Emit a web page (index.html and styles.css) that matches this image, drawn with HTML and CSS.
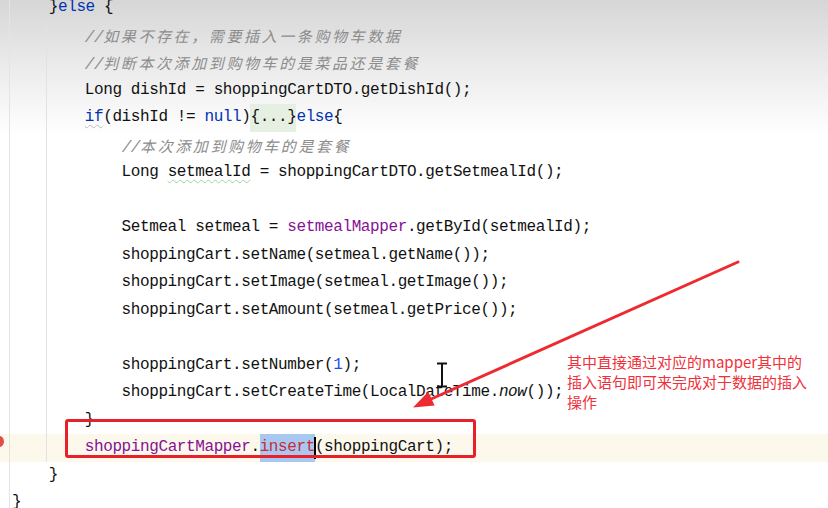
FILE: index.html
```html
<!DOCTYPE html>
<html lang="zh">
<head>
<meta charset="utf-8">
<title>ShoppingCart code</title>
<link rel="stylesheet" href="styles.css">
</head>
<body>
<div class="editor">
  <div class="code">
    <div class="ln">    }<span class="kw">else</span> {</div>
    <div class="block">
      <div class="ln">    <span class="cm">//<span class="cjk">如果不存在，需要插入一条购物车数据</span></span></div>
      <div class="ln">    <span class="cm">//<span class="cjk">判断本次添加到购物车的是菜品还是套餐</span></span></div>
      <div class="ln">    Long dishId = shoppingCartDTO.getDishId();</div>
      <div class="ln">    <span class="kw wave-gray">if</span>(dishId != <span class="kw">null</span>)<span class="fold">{...}</span><span class="kw">else</span>{</div>
      <div class="ln">        <span class="cm">//<span class="cjk">本次添加到购物车的是套餐</span></span></div>
      <div class="ln">        Long <span class="wave-green">setmealId</span> = shoppingCartDTO.getSetmealId();</div>
      <div class="ln"> </div>
      <div class="ln">        Setmeal setmeal = <span class="fld">setmealMapper</span>.getById(setmealId);</div>
      <div class="ln">        shoppingCart.setName(setmeal.getName());</div>
      <div class="ln">        shoppingCart.setImage(setmeal.getImage());</div>
      <div class="ln">        shoppingCart.setAmount(setmeal.getPrice());</div>
      <div class="ln"> </div>
      <div class="ln">        shoppingCart.setNumber(<span class="num">1</span>);</div>
      <div class="ln">        shoppingCart.setCreateTime(LocalDateTime.<span class="st">now</span>());</div>
      <div class="ln">    }</div>
      <div class="ln hl">    <span class="fld">shoppingCartMapper</span>.<span class="sel">insert</span>(shoppingCart);</div>
    </div>
    <div class="ln">    }</div>
    <div class="ln">}</div>
  </div>

  <div class="bp"></div>
  <div class="redbox"></div>
  <svg class="arrow" width="828" height="508" viewBox="0 0 828 508">
    <line x1="738" y1="262" x2="430" y2="399.5" stroke="#ec2a30" stroke-width="3" stroke-linecap="round"/>
    <polygon points="413,407.5 434.6,405.6 428.2,391.8" fill="#ec2a30"/>
  </svg>
  <svg class="ibeam" width="14" height="26" viewBox="0 0 14 26">
    <path d="M2 1.5 H12 M7 1.5 V24.5 M2 24.5 H12" stroke="#111" stroke-width="2" fill="none"/>
  </svg>
  <div class="note">其中直接通过对应的mapper其中的插入语句即可来完成对于数据的插入操作</div>
</div>
</body>
</html>
```

FILE: styles.css
```css
html, body {
  margin: 0;
  padding: 0;
  overflow: hidden;
}

body {
  width: 828px;
  height: 508px;
  background: linear-gradient(to bottom, #d6d6d6 0px, #e9e9e9 60px, #ffffff 135px, #ffffff 100%);
}

.editor {
  position: relative;
  display: flow-root;
  height: 508px;
  padding-left: 9px;
}

.code {
  margin-top: -6px;
  border-left: 1px solid #e4e4e4;
  padding-left: 2px;
  font-family: "Liberation Mono", "DejaVu Sans Mono", monospace;
  font-size: 16px;
  letter-spacing: -0.4px;
  color: #111;
}

.ln {
  height: 27.5px;
  line-height: 27.5px;
  white-space: pre;
}

.block {
  margin-left: 34px;
  border-left: 1px solid #e2e2e2;
  padding-left: 1px;
}

.kw { color: #0033b3; }
.fld { color: #871094; }
.num { color: #1750eb; }
.st { font-style: italic; }

.cm {
  color: #8c8c8c;
  font-style: italic;
}

.cjk {
  font-family: "Noto Sans CJK SC", sans-serif;
  font-size: 15px;
  letter-spacing: 2.6px;
  font-style: italic;
}

.wave-gray {
  text-decoration: underline wavy #bcbcbc;
  text-decoration-thickness: 1px;
  text-underline-offset: 3px;
}

.wave-green {
  text-decoration: underline wavy #9ed49e;
  text-decoration-thickness: 1px;
  text-underline-offset: 3px;
}

.fold {
  display: inline-block;
  background: #e6f0e2;
  height: 27.5px;
}

.hl {
  position: relative;
}

.hl::before {
  content: "";
  position: absolute;
  top: 0;
  bottom: 0;
  left: -80px;
  width: 900px;
  background: #fcf8ec;
  z-index: -1;
}

.sel {
  position: relative;
  display: inline-block;
  height: 27.5px;
  background: #a9c8f0;
  color: #cc2a3a;
}

.sel::after {
  content: "";
  position: absolute;
  right: -1px;
  top: 3px;
  height: 22px;
  width: 2px;
  background: #000;
}

.bp {
  position: absolute;
  left: -6px;
  top: 436px;
  width: 10px;
  height: 11px;
  border-radius: 50%;
  background: #e0504a;
}

.redbox {
  position: absolute;
  left: 65px;
  top: 419px;
  width: 411px;
  height: 39px;
  box-sizing: border-box;
  border: 3.5px solid #e8202a;
  border-radius: 3px;
}

.arrow {
  position: absolute;
  left: 0;
  top: 0;
  pointer-events: none;
}

.ibeam {
  position: absolute;
  left: 435px;
  top: 362px;
}

.note {
  position: absolute;
  left: 567px;
  top: 352px;
  width: 246px;
  font-family: "Noto Sans CJK SC", sans-serif;
  font-size: 15px;
  line-height: 20px;
  color: #f0303a;
}
```
